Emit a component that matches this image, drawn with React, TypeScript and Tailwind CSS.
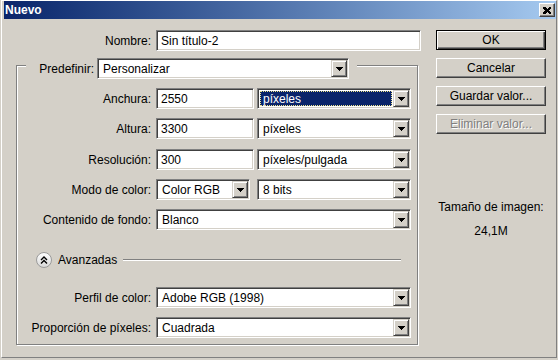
import type { ReactNode } from 'react'

function Arrow() {
  return (
    <svg width="7" height="4" viewBox="0 0 7 4" shapeRendering="crispEdges">
      <rect x="0" y="0" width="7" height="1" fill="#000" />
      <rect x="1" y="1" width="5" height="1" fill="#000" />
      <rect x="2" y="2" width="3" height="1" fill="#000" />
      <rect x="3" y="3" width="1" height="1" fill="#000" />
    </svg>
  )
}

function DropButton() {
  return (
    <div className="flex h-full w-[16px] shrink-0 items-center justify-center border border-t-[#d4d0c8] border-l-[#d4d0c8] border-b-[#404040] border-r-[#404040] bg-[#d4d0c8] shadow-[inset_1px_1px_0_#fff,inset_-1px_-1px_0_#808080]">
      <Arrow />
    </div>
  )
}

const sunken =
  'flex h-[21px] items-center border border-t-[#808080] border-l-[#808080] border-b-white border-r-white bg-white shadow-[inset_1px_1px_0_#404040,inset_-1px_-1px_0_#d4d0c8]'

function TextField({ value, className }: { value: string; className: string }) {
  return (
    <div className={`${sunken} pl-[4px] ${className}`}>
      <span className="whitespace-nowrap">{value}</span>
    </div>
  )
}

function Select({
  value,
  className,
  selected = false,
  h = 'h-[21px]',
}: {
  value: string
  className: string
  selected?: boolean
  h?: string
}) {
  return (
    <div className={`${sunken} ${h} p-[1px] ${className}`}>
      {selected ? (
        <span className="m-[1px] flex h-[calc(100%-2px)] flex-1 items-center border border-dotted border-[#f0e68c] bg-[#0a246a] pl-[2px] text-white">
          {value}
        </span>
      ) : (
        <span className="flex-1 whitespace-nowrap pl-[4px]">{value}</span>
      )}
      <DropButton />
    </div>
  )
}

function Row({ label, children, mt = 'mt-[9px]' }: { label: string; children: ReactNode; mt?: string }) {
  return (
    <div className={`flex items-center ${mt}`}>
      <span className="w-[135px] whitespace-nowrap pr-[1px] text-right">{label}</span>
      <div className="ml-[4px] flex items-center">{children}</div>
    </div>
  )
}

function Button({ children, primary = false, disabled = false }: { children: ReactNode; primary?: boolean; disabled?: boolean }) {
  const frame = primary
    ? 'border border-black shadow-[inset_1px_1px_0_#fff,inset_-1px_-1px_0_#404040,inset_-2px_-2px_0_#808080]'
    : 'border border-t-white border-l-white border-b-[#404040] border-r-[#404040] shadow-[inset_-1px_-1px_0_#808080]'
  return (
    <div
      className={`flex h-[20px] w-[110px] items-center justify-center bg-[#d4d0c8] ${frame} ${
        disabled ? 'text-[#808080] [text-shadow:1px_1px_0_#fff]' : ''
      }`}
    >
      {children}
    </div>
  )
}

function ChevronCircle() {
  return (
    <svg width="16" height="16" viewBox="0 0 16 16">
      <defs>
        <linearGradient id="cc" x1="0" y1="0" x2="0" y2="1">
          <stop offset="0" stopColor="#ffffff" />
          <stop offset="1" stopColor="#d8d8d8" />
        </linearGradient>
      </defs>
      <circle cx="8" cy="8" r="7.5" fill="url(#cc)" stroke="#9a9a9a" />
      <polyline points="5,8 8,5 11,8" fill="none" stroke="#000" strokeWidth="1.4" />
      <polyline points="5,11.5 8,8.5 11,11.5" fill="none" stroke="#000" strokeWidth="1.4" />
    </svg>
  )
}

export default function App() {
  return (
    <div className="h-[360px] w-[558px] bg-[#d4d0c8] font-['Liberation_Sans',Arial,sans-serif] text-[12px] leading-[14px] text-black">
      <div className="ml-[1px] flex h-[358px] w-[556px] flex-col border border-t-white border-l-white border-r-[#808080] border-b-[#808080] pl-[2px]">
        {/* title bar */}
        <div className="flex h-[18px] items-center justify-between bg-linear-to-r from-[#0a246a] to-[#a6caf0] pl-[1px] pr-[1px]">
          <span className="text-[12px] font-bold text-white">Nuevo</span>
          <div className="flex h-[14px] w-[16px] items-center justify-center border border-t-white border-l-white border-b-[#404040] border-r-[#404040] bg-[#d4d0c8] shadow-[inset_-1px_-1px_0_#808080]">
            <svg width="8" height="7" viewBox="0 0 8 7" shapeRendering="crispEdges">
              <path d="M0 0h2l2 2 2-2h2v1L6 3.5 8 6v1H6L4 5 2 7H0V6l2-2.5L0 1z" fill="#000" />
            </svg>
          </div>
        </div>

        <div className="flex pt-[11px]">
          {/* left column */}
          <div className="flex w-[417px] flex-col">
            <div className="flex items-center">
              <span className="w-[148px] pr-[1px] text-right">Nombre:</span>
              <TextField value="Sin título-2" className="ml-[4px] w-[265px]" />
            </div>

            <div className="ml-[12px] mt-[14px] flex w-[402px] flex-col border border-[#808080] pb-[6px] shadow-[inset_1px_1px_0_#fff,1px_1px_0_#fff]">
              <div className="-mt-[8px] ml-[9px] flex w-fit items-center bg-[#d4d0c8] pr-[8px]">
                <span className="w-[69px] pr-[1px] text-right">Predefinir:</span>
                <Select value="Personalizar" className="ml-[2px] w-[252px]" h="h-[20px]" />
              </div>

              <Row label="Anchura:">
                <TextField value="2550" className="w-[98px]" />
                <Select value="píxeles" selected className="ml-[3px] w-[154px]" />
              </Row>
              <Row label="Altura:">
                <TextField value="3300" className="w-[98px]" />
                <Select value="píxeles" className="ml-[3px] w-[154px]" />
              </Row>
              <Row label="Resolución:" mt="mt-[10px]">
                <TextField value="300" className="w-[98px]" />
                <Select value="píxeles/pulgada" className="ml-[3px] w-[154px]" />
              </Row>
              <Row label="Modo de color:">
                <Select value="Color RGB" className="w-[94px]" />
                <Select value="8 bits" className="ml-[7px] w-[154px]" />
              </Row>
              <Row label="Contenido de fondo:">
                <Select value="Blanco" className="w-[255px]" />
              </Row>

              <div className="ml-[19px] mr-[16px] mt-[22px] flex h-[16px] items-center">
                <ChevronCircle />
                <span className="ml-[6px]">Avanzadas</span>
                <div className="ml-[6px] h-[2px] flex-1 border-t border-b border-t-[#808080] border-b-white" />
              </div>

              <Row label="Perfil de color:" mt="mt-[19px]">
                <Select value="Adobe RGB (1998)" className="w-[255px]" />
              </Row>
              <Row label="Proporción de píxeles:">
                <Select value="Cuadrada" className="w-[255px]" />
              </Row>
            </div>
          </div>

          {/* right column */}
          <div className="ml-[15px] flex w-[110px] flex-col">
            <div className="flex flex-col gap-[8px]">
              <Button primary>OK</Button>
              <Button>Cancelar</Button>
              <Button>Guardar valor...</Button>
              <Button disabled>Eliminar valor...</Button>
            </div>
            <div className="mt-[66px] whitespace-nowrap text-center">Tamaño de imagen:</div>
            <div className="mt-[10px] text-center">24,1M</div>
          </div>
        </div>
      </div>
    </div>
  )
}
